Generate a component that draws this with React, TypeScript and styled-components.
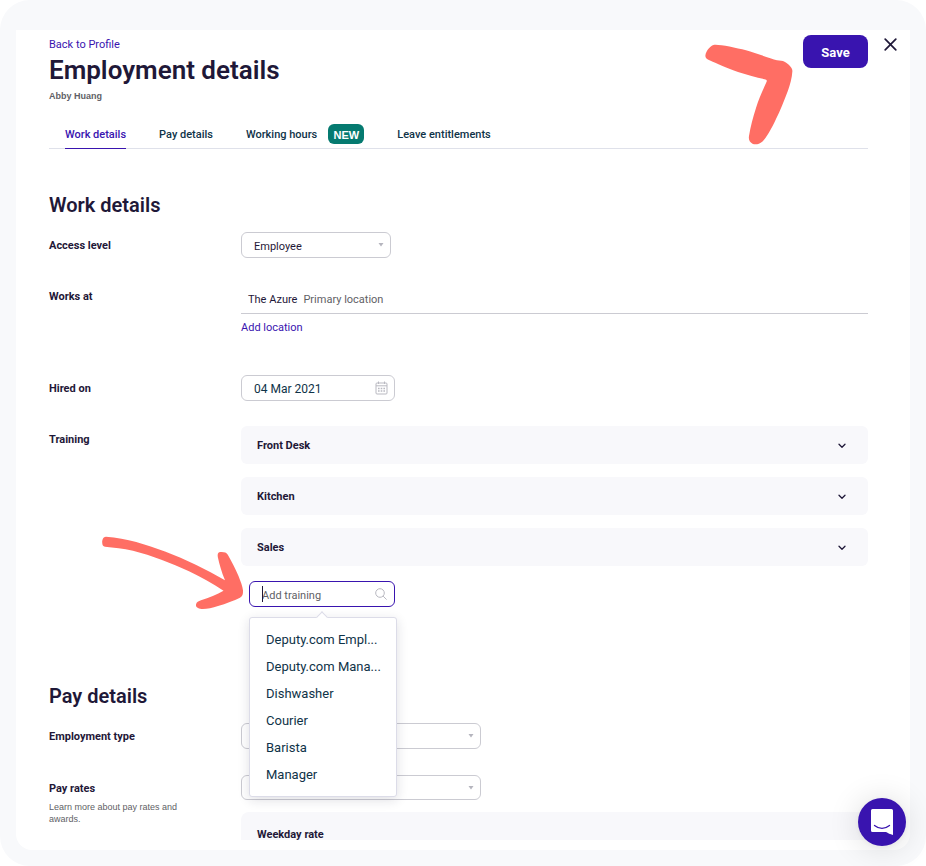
import React from "react";
import styled, { createGlobalStyle, css } from "styled-components";

const color = {
  ink: "#1f1838",
  navy: "#0f3348",
  grey: "#5f5f66",
  purple: "#3914af",
  teal: "#057a70",
  coral: "#ff6e64",
  panel: "#f8f8fb",
  border: "#cbcbd2",
};

const smallFont = `"Liberation Sans", Arial, sans-serif`;

const GlobalStyle = createGlobalStyle`
  *, *::before, *::after { box-sizing: border-box; }
  body { margin: 0; background: #fff; }
  body, button, input, select {
    font-family: Roboto, "Liberation Sans", sans-serif;
    color: ${color.ink};
  }
  h1, h2, p, ul { margin: 0; padding: 0; }
  button { border: 0; padding: 0; background: none; cursor: pointer; }
  a { text-decoration: none; }
`;

const Frame = styled.div`
  display: flex;
  height: 100vh;
  padding: 30px 16px 16px;
  border-radius: 30px;
  background: #f8f9fb;
`;

const Card = styled.div`
  flex: 1;
  min-width: 0;
  display: flex;
  padding-bottom: 10px;
  border-radius: 0 0 16px 16px;
  background: #fff;
`;

const Viewport = styled.div`
  flex: 1;
  min-width: 0;
  overflow: hidden;
`;

const Header = styled.header`
  display: flex;
  align-items: flex-start;
  justify-content: space-between;
  padding: 5px 13px 0 33px;
`;

const Heading = styled.div`
  display: flex;
  flex-direction: column;
  align-items: flex-start;
  padding-top: 2px;
`;

const TextLink = styled.a`
  color: ${color.purple};
  font-size: 11px;
  line-height: 16px;
`;

const Title = styled.h1`
  font-size: 26px;
  line-height: 35px;
  font-weight: 600;
`;

const PersonName = styled.p`
  color: ${color.grey};
  font-family: ${smallFont};
  font-size: 9px;
  line-height: 16px;
  font-weight: 600;
`;

const Actions = styled.div`
  position: relative;
  display: flex;
  align-items: flex-start;
  gap: 16px;
`;

const SaveButton = styled.button`
  width: 65px;
  height: 33px;
  padding-top: 2px;
  border-radius: 8px;
  background: ${color.purple};
  color: #fff;
  font-size: 13px;
  font-weight: 700;
`;

const CloseButton = styled.button`
  display: flex;
  align-items: center;
  height: 19px;
`;

const SavePointer = styled.svg`
  position: absolute;
  left: -98px;
  top: 8px;
  z-index: 1;
  pointer-events: none;
`;

const Content = styled.main`
  padding: 0 42px 0 33px;
`;

const Tabs = styled.nav`
  display: flex;
  gap: 33px;
  height: 29px;
  margin-top: 16px;
  padding-left: 16px;
  border-bottom: 1px solid #dfe1ea;
`;

const Tab = styled.a<{ $active?: boolean }>`
  display: flex;
  align-items: center;
  gap: 11px;
  height: 29px;
  border-bottom: 1px solid transparent;
  color: ${color.navy};
  font-size: 11px;
  font-weight: 500;
  white-space: nowrap;
  ${(p) =>
    p.$active &&
    css`
      color: ${color.purple};
      border-bottom-color: ${color.purple};
    `}
`;

const Badge = styled.span`
  width: 36px;
  height: 20px;
  border-radius: 6px;
  background: ${color.teal};
  color: #fff;
  font-family: ${smallFont};
  font-size: 11px;
  line-height: 22px;
  font-weight: 700;
  text-align: center;
`;

const Section = styled.section<{ $top: number }>`
  padding-top: ${(p) => p.$top}px;
`;

const SectionTitle = styled.h2`
  margin-bottom: 11px;
  font-size: 20px;
  line-height: 32px;
  font-weight: 600;
`;

const Row = styled.div<{ $gap: number }>`
  display: grid;
  grid-template-columns: 192px minmax(0, 1fr);
  align-items: start;
  margin-bottom: ${(p) => p.$gap}px;
`;

const LabelCell = styled.div`
  padding: 6px 40px 0 0;
`;

const Label = styled.label`
  display: block;
  font-size: 11px;
  line-height: 16px;
  font-weight: 700;
`;

const Hint = styled.p`
  margin-top: 4px;
  color: ${color.grey};
  font-family: ${smallFont};
  font-size: 9px;
  line-height: 12px;
`;

const Control = styled.div<{ $width: number }>`
  position: relative;
  width: ${(p) => p.$width}px;
  max-width: 100%;
`;

const ControlIcon = styled.svg<{ $right: number }>`
  position: absolute;
  right: ${(p) => p.$right}px;
  top: 0;
  bottom: 0;
  margin: auto 0;
  pointer-events: none;
`;

const field = css`
  display: block;
  width: 100%;
  height: 26px;
  padding: 2px 12px 0;
  border: 1px solid ${color.border};
  border-radius: 6px;
  background: #fff;
  outline: none;
`;

const Select = styled.select<{ $compact?: boolean }>`
  ${field}
  ${(p) => p.$compact && "height: 25px;"}
  appearance: none;
  font-size: 11px;
`;

const DateInput = styled.input`
  ${field}
  color: ${color.navy};
  font-size: 12px;
`;

const TrainingInput = styled.input`
  ${field}
  border-color: ${color.purple};
  font-size: 11px;
  caret-color: transparent;
  &::placeholder {
    color: ${color.grey};
    opacity: 1;
  }
`;

const Location = styled.div`
  display: flex;
  gap: 6px;
  margin-bottom: 6px;
  padding: 9px 7px 5px;
  border-bottom: 1px solid ${color.border};
  font-size: 11px;
  line-height: 16px;
`;

const Muted = styled.span`
  color: ${color.grey};
`;

const LocationLink = styled(TextLink)`
  display: block;
`;

const Panels = styled.div`
  display: flex;
  flex-direction: column;
  gap: 13px;
`;

const Panel = styled.button`
  display: flex;
  align-items: center;
  justify-content: space-between;
  width: 100%;
  height: 38px;
  padding: 1px 22px 0 16px;
  border-radius: 6px;
  background: ${color.panel};
  font-size: 11px;
  font-weight: 700;
`;

const RatePanel = styled.div`
  margin-top: 12px;
  padding: 15px 16px;
  border-radius: 8px;
  background: ${color.panel};
  font-size: 11px;
  line-height: 16px;
  font-weight: 700;
`;

const Picker = styled(Control)`
  margin: 15px 0 0 8px;
`;

const Caret = styled.span`
  position: absolute;
  left: 13px;
  top: 5px;
  width: 1px;
  height: 16px;
  background: ${color.ink};
`;

const PickerPointer = styled.svg`
  position: absolute;
  left: -147px;
  top: -45px;
  pointer-events: none;
`;

const Menu = styled.ul`
  position: absolute;
  top: 36px;
  left: 0;
  z-index: 2;
  width: 148px;
  padding: 8px 0;
  border: 1px solid #dcdce8;
  border-radius: 3px;
  background: #fff;
  box-shadow: 0 3px 12px rgba(30, 30, 60, 0.14);
  list-style: none;
  &::before {
    content: "";
    position: absolute;
    top: -5px;
    left: 68px;
    width: 8px;
    height: 8px;
    border: solid #dcdce8;
    border-width: 1px 0 0 1px;
    background: #fff;
    transform: rotate(45deg);
  }
`;

const MenuItem = styled.button`
  display: block;
  width: 100%;
  padding: 0 16px;
  color: ${color.navy};
  font-size: 13px;
  line-height: 27px;
  text-align: left;
  white-space: nowrap;
`;

const ChatButton = styled.button`
  position: fixed;
  right: 20px;
  bottom: 20px;
  z-index: 3;
  display: grid;
  place-items: center;
  width: 48px;
  height: 48px;
  border-radius: 50%;
  background: ${color.purple};
  box-shadow: 0 1px 6px rgba(0, 0, 0, 0.06), 0 2px 32px rgba(0, 0, 0, 0.14);
`;

const Arrow = () => (
  <ControlIcon $right={7} width="6" height="4" viewBox="0 0 6 4">
    <path d="M0.5 0h5L3 3.6z" fill="#b5b5be" />
  </ControlIcon>
);

const Chevron = () => (
  <svg width="8" height="6" viewBox="0 0 8 6" fill="none" stroke={color.ink} strokeWidth="1.3">
    <path d="M1 1.200 4 4.200 7 1.200" strokeLinecap="round" strokeLinejoin="round" />
  </svg>
);

const trainings = ["Front Desk", "Kitchen", "Sales"];
const options = ["Deputy.com Empl...", "Deputy.com Mana...", "Dishwasher", "Courier", "Barista", "Manager"];

export default function App() {
  return (
    <Frame>
      <GlobalStyle />
      <Card>
        <Viewport>
          <Header>
            <Heading>
              <TextLink href="#profile">Back to Profile</TextLink>
              <Title>Employment details</Title>
              <PersonName>Abby Huang</PersonName>
            </Heading>
            <Actions>
              <SaveButton type="button">Save</SaveButton>
              <CloseButton type="button" aria-label="Close">
                <svg width="13" height="13" viewBox="0 0 13 13" stroke={color.ink} strokeWidth="1.7" strokeLinecap="round">
                  <path d="M1.2 1.2l10.6 10.6M11.8 1.2 1.2 11.8" />
                </svg>
              </CloseButton>
              <SavePointer width="88" height="102" viewBox="0 0 88 102" aria-hidden="true">
                <path
                  d="M0.4 12.5C0.8 8 5 3.2 8.5 2C12 0.8 30 4.5 41 7.3C51 10 65 15.5 72 17.3C75 18 77.5 17.6 79.5 18.8C83 20.8 87.5 24.5 87.4 28C87 35 85 42 83 47.5C79 58 75 68 71 76C66.500 86 61 95 57.500 98.500C54 101.500 50 102 47.500 100.700C44.500 99 43.400 96.500 44 93C45.500 84 48 74 51 65C54 55 58.500 46 61.700 38.500C62.200 37 61 36.500 59.500 36.200C52 34.600 42 32 33 29C22 25 12 20.500 5 17.500C1.500 16 0.200 14.500 0.400 12.500Z"
                  fill={color.coral}
                />
              </SavePointer>
            </Actions>
          </Header>

          <Content>
            <Tabs>
              <Tab href="#work" $active aria-current="page">Work details</Tab>
              <Tab href="#pay">Pay details</Tab>
              <Tab href="#hours">
                Working hours <Badge>NEW</Badge>
              </Tab>
              <Tab href="#leave">Leave entitlements</Tab>
            </Tabs>

            <Section $top={40}>
              <SectionTitle>Work details</SectionTitle>
              <Row $gap={25}>
                <LabelCell>
                  <Label htmlFor="access">Access level</Label>
                </LabelCell>
                <Control $width={150}>
                  <Select id="access" defaultValue="Employee">
                    <option>Employee</option>
                    <option>Manager</option>
                  </Select>
                  <Arrow />
                </Control>
              </Row>
              <Row $gap={39}>
                <LabelCell>
                  <Label as="div">Works at</Label>
                </LabelCell>
                <div>
                  <Location>
                    <span>The Azure</span>
                    <Muted>Primary location</Muted>
                  </Location>
                  <LocationLink href="#location">Add location</LocationLink>
                </div>
              </Row>
              <Row $gap={25}>
                <LabelCell>
                  <Label htmlFor="hired">Hired on</Label>
                </LabelCell>
                <Control $width={154}>
                  <DateInput id="hired" type="text" defaultValue="04 Mar 2021" />
                  <ControlIcon $right={7} width="13" height="14" viewBox="0 0 13 14" fill="none" stroke="#b9b9c1">
                    <rect x="1" y="2" width="11" height="11" rx="1" />
                    <path d="M1 4.800h11M3.500 0.500v2.500M9.500 0.500v2.500" />
                    <path d="M3 7.500h7M3 10h7" strokeWidth="1.500" strokeDasharray="1.600 1.100" />
                  </ControlIcon>
                </Control>
              </Row>
              <Row $gap={0}>
                <LabelCell>
                  <Label htmlFor="training">Training</Label>
                </LabelCell>
                <div>
                  <Panels>
                    {trainings.map((name) => (
                      <Panel key={name} type="button" aria-expanded={false}>
                        {name}
                        <Chevron />
                      </Panel>
                    ))}
                  </Panels>
                  <Picker $width={146}>
                    <TrainingInput id="training" type="text" placeholder="Add training" />
                    <Caret />
                    <ControlIcon $right={8} width="12" height="12" viewBox="0 0 12 12" fill="none" stroke="#b9b9c1">
                      <circle cx="5" cy="5" r="4.300" />
                      <path d="M8.100 8.100 11.600 11.600" />
                    </ControlIcon>
                    <PickerPointer width="142" height="74" viewBox="0 0 142 74" aria-hidden="true">
                      <path
                        d="M0.200 6.500C0 3.500 1.500 0.600 4 0.700C25 2.500 44 8.200 63 15.500C84 23.500 104 33.500 123 44.300C119.500 36 117.500 28.500 115.800 21C115.300 18 116 16.300 118 16.100C121.500 15.800 124.500 16.300 125.800 18.700C130 26 133.500 33 136.500 40C138.800 46 140.500 50 141 54.500C141.200 58 140.500 60.500 138 61.700C132 64.800 124 67.500 116 70C110 72 104 73.300 99.500 73C96 72.500 93.500 71 94 68.500C94.500 66 96.500 65.200 99 64.300C107 61.500 115 58.500 121.500 54.700C111 47.500 99 41 87 35.300C69 27 50 19.500 31 14.700C21 12.300 12 11.500 3 10.700C1 10.500 0.300 9 0.200 6.500Z"
                        fill={color.coral}
                      />
                    </PickerPointer>
                    <Menu>
                      {options.map((name) => (
                        <li key={name}>
                          <MenuItem type="button">{name}</MenuItem>
                        </li>
                      ))}
                    </Menu>
                  </Picker>
                </div>
              </Row>
            </Section>

            <Section $top={73}>
              <SectionTitle>Pay details</SectionTitle>
              <Row $gap={26}>
                <LabelCell>
                  <Label htmlFor="type">Employment type</Label>
                </LabelCell>
                <Control $width={240}>
                  <Select id="type" />
                  <Arrow />
                </Control>
              </Row>
              <Row $gap={0}>
                <LabelCell>
                  <Label htmlFor="rates">Pay rates</Label>
                  <Hint>Learn more about pay rates and awards.</Hint>
                </LabelCell>
                <div>
                  <Control $width={240}>
                    <Select id="rates" $compact />
                    <Arrow />
                  </Control>
                  <RatePanel>Weekday rate</RatePanel>
                </div>
              </Row>
            </Section>
          </Content>
        </Viewport>
      </Card>
      <ChatButton type="button" aria-label="Open chat">
        <svg width="22" height="26" viewBox="0 0 22 26">
          <path d="M1.500 0h19a1.500 1.500 0 0 1 1.500 1.500v24.500c-3-0.800-5-1.800-7-3H1.500a1.500 1.500 0 0 1-1.500-1.500V1.500a1.500 1.500 0 0 1 1.500-1.500z" fill="#fff" />
          <path d="M3.500 16.500Q11 22.400 18.500 16.500" fill="none" stroke={color.purple} strokeWidth="1.300" strokeLinecap="round" />
        </svg>
      </ChatButton>
    </Frame>
  );
}
